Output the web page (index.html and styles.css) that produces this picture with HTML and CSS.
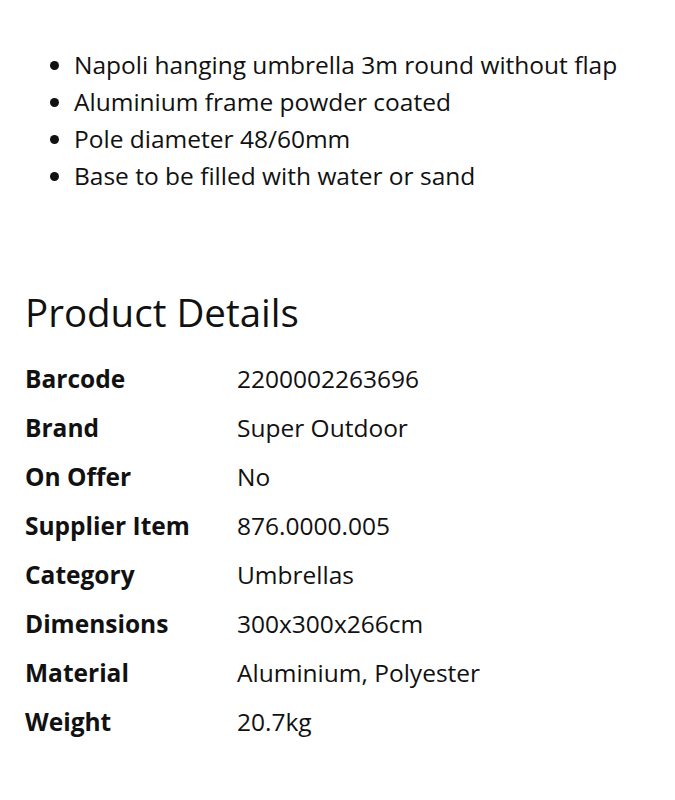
FILE: index.html
```html
<!DOCTYPE html>
<html>
<head>
<meta charset="utf-8">
<link rel="stylesheet" href="styles.css">
</head>
<body>
<ul class="features">
  <li>Napoli hanging umbrella 3m round without flap</li>
  <li>Aluminium frame powder coated</li>
  <li>Pole diameter 48/60mm</li>
  <li>Base to be filled with water or sand</li>
</ul>
<h2 class="title">Product Details</h2>
<div class="details">
  <div class="label">Barcode</div><div class="value">2200002263696</div>
  <div class="label">Brand</div><div class="value">Super Outdoor</div>
  <div class="label">On Offer</div><div class="value">No</div>
  <div class="label">Supplier Item</div><div class="value">876.0000.005</div>
  <div class="label">Category</div><div class="value">Umbrellas</div>
  <div class="label">Dimensions</div><div class="value">300x300x266cm</div>
  <div class="label">Material</div><div class="value">Aluminium, Polyester</div>
  <div class="label">Weight</div><div class="value">20.7kg</div>
</div>
</body>
</html>
```
FILE: styles.css
```css
html, body {
  margin: 0;
  padding: 0;
  background: #ffffff;
}
body {
  font-family: "Open Sans", sans-serif;
  color: #111111;
  padding: 0 25px;
}
.features {
  margin: 0;
  padding: 46px 0 0 49px;
  font-size: 24.5px;
  line-height: 37px;
}
.title {
  margin: 93px 0 0 0;
  font-size: 38.5px;
  font-weight: 400;
  line-height: 50px;
}
.details {
  display: grid;
  grid-template-columns: 212px 1fr;
  grid-auto-rows: 49px;
  align-items: center;
  margin-top: 17px;
  font-size: 24.5px;
}
.label {
  font-weight: 700;
}
```
